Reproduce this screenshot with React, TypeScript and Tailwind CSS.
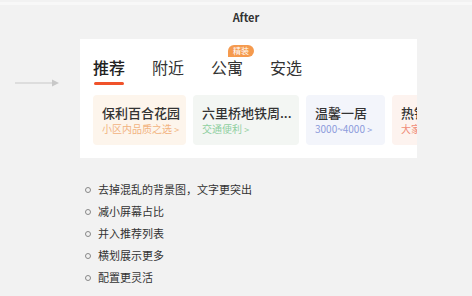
import React from 'react';

const tabs = ['推荐', '附近', '公寓', '安选'];

const cards = [
  { title: '保利百合花园', sub: '小区内品质之选', w: 'w-[93px]', bg: 'bg-[#fdf5ec]', color: 'text-[#f2b37f]' },
  { title: '六里桥地铁周...', sub: '交通便利', w: 'w-[106px]', bg: 'bg-[#f3f6f3]', color: 'text-[#8fcf9f]' },
  { title: '温馨一居', sub: '3000~4000', w: 'w-[79px]', bg: 'bg-[#f3f5fb]', color: 'text-[#8c9bdc]' },
  { title: '热销房源', sub: '大家都在看', w: 'w-[80px]', bg: 'bg-[#fdf3ef]', color: 'text-[#f08c78]' },
];

const notes = ['去掉混乱的背景图，文字更突出', '减小屏幕占比', '并入推荐列表', '横划展示更多', '配置更灵活'];

const App: React.FC = () => {
  return (
    <div
      className="w-[472px] h-[296px] bg-[#f2f2f2] overflow-hidden text-[#333]"
      style={{ fontFamily: '"Noto Sans CJK SC", "Liberation Sans", sans-serif' }}
    >
      <div className="h-[3px] mt-[2px] bg-[#f8f8f8]" />
      <div className="h-[24px] flex items-center justify-center pl-[20px] text-[11px] font-bold text-[#333]">After</div>

      <div className="flex mt-[10px]">
        <div className="w-[80px] pt-[40px] pl-[15px]">
          <svg width="45" height="8" viewBox="0 0 45 8">
            <line x1="0" y1="4" x2="38" y2="4" stroke="#c8c8c8" strokeWidth="1" />
            <polygon points="37,0.5 44,4 37,7.5" fill="#c8c8c8" />
          </svg>
        </div>

        <div className="w-[337px] h-[119px] bg-white overflow-hidden pl-[13px]">
          <div className="flex gap-[27px] pt-[17px] h-[56px]">
            {tabs.map((t, i) => (
              <div key={t} className="relative flex flex-col items-center">
                <span className={`text-[16px] leading-[22px] ${i === 0 ? 'font-medium text-[#222]' : 'text-[#333]'}`}>{t}</span>
                {i === 0 && <div className="mt-[4px] w-[30px] h-[3px] rounded-full bg-[#f0522a]" />}
                {i === 2 && (
                  <div className="absolute -top-[11px] left-[17px] h-[12px] px-[5px] rounded-[6px] rounded-bl-none bg-[#f59a4e] text-white text-[8px] leading-[12px] whitespace-nowrap">
                    精装
                  </div>
                )}
              </div>
            ))}
          </div>

          <div className="flex gap-[7px]">
            {cards.map((c) => (
              <div key={c.title} className={`${c.w} shrink-0 h-[50px] rounded-[4px] ${c.bg} pl-[9px] pt-[9px] overflow-hidden whitespace-nowrap`}>
                <div className="text-[13px] leading-[17px] font-medium text-[#333]">{c.title}</div>
                <div className={`text-[10px] leading-[15px] ${c.color}`}>
                  {c.sub} <span className="text-[9px]">&gt;</span>
                </div>
              </div>
            ))}
          </div>
        </div>
      </div>

      <div className="pl-[85px] pt-[23px] flex flex-col gap-[5px]">
        {notes.map((n) => (
          <div key={n} className="flex items-center h-[17px]">
            <span className="w-[6px] h-[6px] rounded-full border border-[#888] mr-[7px]" />
            <span className="text-[11px] text-[#333]">{n}</span>
          </div>
        ))}
      </div>
    </div>
  );
};

export default App;
